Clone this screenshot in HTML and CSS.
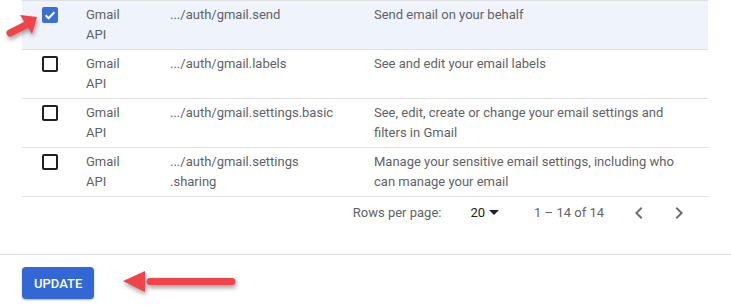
FILE: index.html
```html
<!DOCTYPE html>
<html>
<head>
<meta charset="utf-8">
<link rel="stylesheet" href="styles.css">
</head>
<body>
<div class="page">
  <div class="table">
    <div class="row selected">
      <div class="cell check"><span class="cb checked"><svg viewBox="0 0 16 16" width="16" height="16"><path d="M3.6 8.2l3 3 5.8-6" fill="none" stroke="#fff" stroke-width="2"/></svg></span></div>
      <div class="cell api">Gmail API</div>
      <div class="cell scope">.../auth/gmail.send</div>
      <div class="cell desc">Send email on your behalf</div>
    </div>
    <div class="row">
      <div class="cell check"><span class="cb"></span></div>
      <div class="cell api">Gmail API</div>
      <div class="cell scope">.../auth/gmail.labels</div>
      <div class="cell desc">See and edit your email labels</div>
    </div>
    <div class="row">
      <div class="cell check"><span class="cb"></span></div>
      <div class="cell api">Gmail API</div>
      <div class="cell scope">.../auth/gmail.settings.basic</div>
      <div class="cell desc">See, edit, create or change your email settings and filters in Gmail</div>
    </div>
    <div class="row">
      <div class="cell check"><span class="cb"></span></div>
      <div class="cell api">Gmail API</div>
      <div class="cell scope">.../auth/gmail.settings<br>.sharing</div>
      <div class="cell desc">Manage your sensitive email settings, including who can manage your email</div>
    </div>
    <div class="pager">
      <span class="rows-label">Rows per page:</span>
      <span class="rows-value">20</span>
      <svg class="drop" viewBox="0 0 10 5" width="10" height="5"><path d="M0 0h10L5 5z" fill="#202124"/></svg>
      <span class="range">1 – 14 of 14</span>
      <svg class="chev" viewBox="0 0 24 24" width="24" height="24"><path d="M15.41 7.41L14 6l-6 6 6 6 1.41-1.41L10.83 12z" fill="#6b6e72"/></svg>
      <svg class="chev next" viewBox="0 0 24 24" width="24" height="24"><path d="M10 6L8.59 7.41 13.17 12l-4.58 4.59L10 18l6-6z" fill="#6b6e72"/></svg>
    </div>
  </div>
  <div class="actions">
    <button class="update">UPDATE</button>
  </div>

  <svg class="arrow arrow-check" viewBox="0 0 50 45" width="50" height="45">
    <line x1="10" y1="33" x2="26" y2="25" stroke="#f2434b" stroke-width="7" stroke-linecap="round"/>
    <polygon points="37,17 32,34 20,15" fill="#f2434b"/>
  </svg>
  <svg class="arrow arrow-update" viewBox="0 0 130 30" width="130" height="30">
    <line x1="30" y1="13.5" x2="112" y2="13.5" stroke="#f2434b" stroke-width="7" stroke-linecap="round"/>
    <polygon points="3,13 25,3 25,24" fill="#f2434b"/>
  </svg>
</div>
</body>
</html>
```

FILE: styles.css
```css
* { box-sizing: border-box; }

body {
  margin: 0;
  background: #fff;
  font-family: Roboto, "Noto Sans", Arial, sans-serif;
  font-size: 13px;
  color: #5f6368;
  width: 731px;
  height: 307px;
  overflow: hidden;
}

.page {
  position: relative;
  width: 731px;
  height: 307px;
}

.table {
  margin-left: 22px;
  width: 686px;
  border-top: 1px solid #e0e0e0;
}

.row {
  display: grid;
  grid-template-columns: 64px 84px 204px 1fr;
  height: 49px;
  border-bottom: 1px solid #e0e0e0;
}

.row.selected {
  background: #eef3fc;
}

.cell {
  padding-top: 4px;
  line-height: 20px;
}

.check {
  padding-top: 6px;
  padding-left: 20px;
}

.cb {
  display: block;
  width: 16px;
  height: 16px;
  border: 2px solid #202124;
  border-radius: 2px;
}

.cb.checked {
  border: none;
  background: #3b6fd7;
}

.cb svg { display: block; }

.api {
  padding-right: 40px;
}

.desc {
  padding-right: 26px;
}

.pager {
  display: flex;
  align-items: center;
  justify-content: flex-end;
  height: 31px;
  padding-right: 17px;
}

.rows-label {
  margin-right: 29px;
}

.rows-value {
  color: #202124;
  margin-right: 4px;
}

.drop {
  display: block;
  margin-right: 35px;
}

.range {
  margin-right: 23px;
}

.chev {
  display: block;
}

.chev.next {
  margin-left: 16px;
}

.actions {
  margin-top: 26px;
  border-top: 1px solid #e0e0e0;
  padding: 12px 0 0 22px;
}

.update {
  display: block;
  height: 32px;
  padding: 0 12px;
  border: none;
  border-radius: 4px;
  background: #3367d6;
  color: #fff;
  font-family: Roboto, "Noto Sans", Arial, sans-serif;
  font-size: 13px;
  font-weight: 500;
  box-shadow: 0 1px 2px rgba(0,0,0,0.3);
}

.arrow {
  position: absolute;
  overflow: visible;
  filter: drop-shadow(1px 3px 2px rgba(0,0,0,0.35));
}

.arrow-check {
  left: 0;
  top: 0;
}

.arrow-update {
  left: 120px;
  top: 268px;
}
```
